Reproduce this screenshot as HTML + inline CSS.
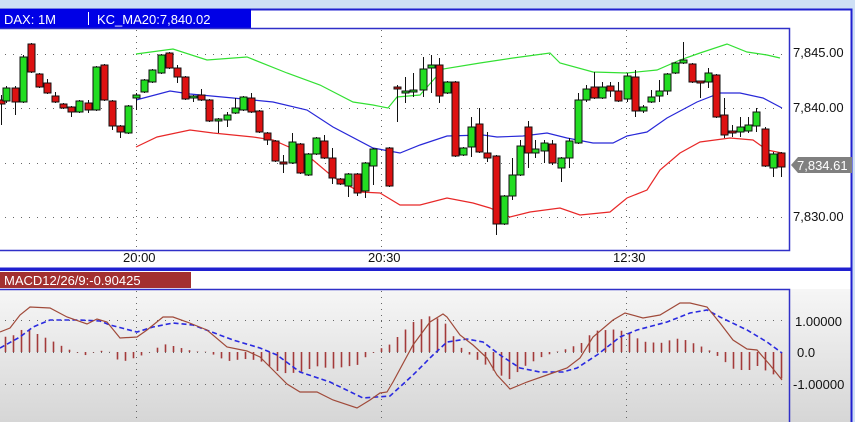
<!DOCTYPE html>
<html><head><meta charset="utf-8"><style>
html,body{margin:0;padding:0;width:855px;height:422px;overflow:hidden;background:#cfe0f5;font-family:"Liberation Sans",sans-serif}
svg{position:absolute;left:0;top:0}
</style></head><body>
<svg id="s" width="855" height="422" xmlns="http://www.w3.org/2000/svg">
<defs><linearGradient id="g" x1="0" y1="0" x2="0" y2="1"><stop offset="0" stop-color="#fbfbfb"/><stop offset="1" stop-color="#d6d6d6"/></linearGradient></defs>
<rect x="0" y="9" width="852" height="260" fill="#fff"/>
<rect x="0" y="269" width="852" height="153" fill="url(#g)"/>
<rect x="0" y="269" width="852" height="20" fill="#fff"/>
<path d="M0 9.5H851.5V268.5H0" fill="none" stroke="#2020d0" stroke-width="2"/>
<path d="M0 270H851.5V422" fill="none" stroke="#2020d0" stroke-width="2"/>
<rect x="0" y="9" width="251" height="19" fill="#0000e6"/>
<text x="4" y="24" fill="#fff" font-size="13">DAX: 1M</text>
<rect x="88" y="12" width="1" height="13" fill="#fff"/>
<text x="97" y="24" fill="#fff" font-size="13">KC_MA20:7,840.02</text>
<path d="M0 28.5H789.5V250.5H0" fill="none" stroke="#3030c8" stroke-width="1.5"/>
<rect x="0" y="272" width="191" height="16" fill="#a33030"/>
<text x="4" y="285" fill="#fff" font-size="13">MACD12/26/9:-0.90425</text>
<path d="M0 289.5H789.5V422" fill="none" stroke="#3030c8" stroke-width="1.5"/>
<g font-size="13" fill="#111">
<text x="793" y="57">7,845.00</text><text x="793" y="112">7,840.00</text><text x="793" y="221">7,830.00</text>
<text x="123" y="262">20:00</text><text x="368" y="262">20:30</text><text x="613" y="262">12:30</text>
<text x="795" y="326">1.00000</text><text x="797" y="357">0.0</text><text x="793" y="389">-1.00000</text>
</g>
<path d="M791 165L798 157H852V173H798Z" fill="#808080"/>
<text x="797" y="170" fill="#fff" font-size="13">7,834.61</text>
<g id="grid" stroke="#666" stroke-width="1" stroke-dasharray="1 7"></g>
<g id="c"></g>
</svg>
<script>
var NS="http://www.w3.org/2000/svg",S=document.getElementById('s'),G=document.getElementById('grid'),C=document.getElementById('c');
function el(t,a,p){var e=document.createElementNS(NS,t);for(var k in a)e.setAttribute(k,a[k]);(p||C).appendChild(e);return e}
[54,108,163,217,320,352,384].forEach(function(y){el('line',{x1:5,x2:788,y1:y+.5,y2:y+.5},G)});
[136,381,626].forEach(function(x){el('line',{x1:x+.5,x2:x+.5,y1:30,y2:250,'stroke-dasharray':'1 5'},G);el('line',{x1:x+.5,x2:x+.5,y1:291,y2:422,'stroke-dasharray':'1 5'},G)});
function pl(pts,col,dash){el('polyline',{points:pts.map(function(p){return p.join(',')}).join(' '),fill:'none',stroke:col,'stroke-width':dash?1.6:1.2,'stroke-dasharray':dash||''})}
pl([[136,54],[173,49],[207,60],[247,57],[287,73],[320,85],[353,102],[373,105],[388,108],[397,97],[420,95],[443,69],[480,63],[513,58],[550,53],[560,63],[593,72],[627,73],[657,70],[680,60],[700,53],[727,44],[747,52],[767,55],[780,58]],'#33e033');
pl([[136,100],[170,91],[190,94],[233,98],[273,102],[307,110],[333,127],[373,148],[400,153],[420,145],[447,136],[483,135],[497,137],[523,136],[547,133],[567,138],[593,143],[613,143],[627,136],[647,132],[667,118],[697,102],[720,93],[740,93],[763,98],[782,108]],'#2828d8');
pl([[136,147],[157,137],[190,130],[213,133],[253,137],[273,140],[307,155],[333,177],[360,192],[380,193],[400,205],[420,205],[447,198],[473,203],[490,208],[510,217],[530,212],[560,208],[580,215],[610,212],[627,198],[647,190],[660,170],[680,153],[700,142],[730,138],[753,140],[767,150],[782,153]],'#e82828');
var K=[[1,100,104,95,125,'r'],[6,88,101,86,103,'g'],[15,88,102,86,115,'r'],[23,57,102,55,103,'g'],[31,44,72,43,73,'r'],[39,74,87,73,88,'r'],[47,83,93,79,94,'r'],[55,96,102,92,103,'r'],[63,104,108,103,109,'r'],[71,107,112,106,117,'r'],[79,101,112,100,113,'g'],[88,103,110,100,113,'r'],[96,67,110,66,111,'g'],[104,65,100,64,101,'r'],[112,101,126,100,130,'r'],[120,126,132,125,138,'r'],[128,106,133,105,134,'g'],[136,95,98,93,110,'g'],[144,80,92,79,93,'g'],[152,70,82,69,83,'g'],[161,55,73,54,74,'g'],[169,53,68,52,69,'r'],[177,68,77,65,83,'r'],[185,77,99,76,100,'r'],[193,96,98,95,102,'g'],[201,95,100,89,101,'r'],[209,100,121,99,122,'r'],[218,119,121,118,133,'g'],[227,115,120,112,127,'g'],[235,108,113,98,114,'g'],[243,97,110,96,111,'g'],[251,98,112,93,113,'r'],[259,111,132,110,133,'r'],[267,133,140,132,145,'r'],[275,141,161,140,162,'r'],[283,162,164,155,173,'r'],[292,142,163,133,164,'g'],[300,144,173,143,174,'r'],[308,154,175,153,176,'g'],[316,138,154,137,155,'g'],[324,141,158,135,159,'r'],[332,158,178,148,184,'r'],[340,179,184,178,185,'r'],[348,174,186,173,197,'g'],[357,174,193,173,196,'r'],[365,163,191,162,198,'g'],[373,149,166,148,185,'g'],[389,148,186,147,187,'r'],[397,87,89,85,122,'r'],[405,91,93,77,103,'g'],[413,90,92,73,97,'g'],[423,69,90,57,97,'g'],[431,65,68,55,93,'g'],[439,65,96,58,103,'r'],[447,82,93,81,94,'g'],[455,82,156,81,157,'r'],[463,148,155,147,156,'g'],[471,127,147,117,157,'g'],[479,124,152,108,153,'r'],[487,153,158,132,162,'r'],[496,156,224,155,235,'r'],[504,196,224,195,225,'g'],[512,175,196,158,200,'g'],[520,146,175,140,176,'g'],[528,127,153,121,168,'r'],[535,149,153,140,158,'g'],[544,143,151,140,163,'g'],[552,144,163,140,165,'r'],[561,158,168,157,182,'g'],[569,141,158,138,168,'g'],[578,100,143,93,144,'g'],[586,89,100,85,102,'g'],[594,87,98,72,99,'r'],[602,87,98,82,99,'g'],[610,86,91,82,97,'r'],[618,91,101,82,102,'r'],[627,76,99,73,102,'g'],[635,77,111,70,117,'r'],[643,107,111,105,113,'g'],[651,97,102,90,103,'g'],[659,91,96,80,102,'g'],[667,74,91,73,95,'g'],[675,63,73,62,74,'g'],[683,60,63,42,64,'g'],[692,64,82,63,83,'r'],[700,81,83,81,98,'r'],[708,73,82,68,88,'g'],[716,75,117,74,118,'r'],[724,115,135,98,138,'r'],[732,131,133,125,137,'r'],[740,127,132,117,137,'g'],[748,125,131,117,133,'g'],[756,112,126,108,132,'g'],[765,129,166,127,167,'r'],[773,154,168,152,177,'g'],[781,153,167,152,177,'r']];
K.forEach(function(k){el('line',{x1:k[0]+.5,x2:k[0]+.5,y1:k[3],y2:k[4],stroke:'#111','stroke-width':1});el('rect',{x:k[0]-3,y:k[1],width:7,height:Math.max(2,k[2]-k[1]),fill:k[5]=='g'?'#22dd22':'#dd1111',stroke:'#111','stroke-width':1})});
var M=[[0,332],[10,328],[20,315],[30,307],[50,308],[67,317],[87,324],[97,319],[107,322],[120,338],[137,337],[147,330],[163,317],[173,317],[187,322],[207,330],[227,347],[247,351],[260,357],[273,370],[287,384],[300,392],[317,392],[333,400],[357,408],[370,400],[380,393],[387,392],[393,382],[413,345],[430,322],[443,314],[447,317],[460,335],[473,345],[487,358],[497,375],[510,389],[527,382],[547,375],[567,368],[580,358],[593,337],[613,320],[625,313],[643,318],[660,315],[680,303],[690,303],[707,307],[720,323],[733,340],[747,349],[757,350],[770,365],[782,380]];
var Sg=[[0,348],[20,337],[33,327],[50,320],[80,320],[100,321],[110,325],[137,332],[153,327],[173,323],[193,325],[233,340],[260,348],[277,355],[300,372],[330,382],[363,398],[390,396],[413,375],[433,355],[447,342],[467,339],[483,342],[500,355],[520,368],[540,372],[563,372],[577,368],[597,355],[620,337],[637,330],[667,322],[690,313],[707,310],[720,317],[747,330],[767,342],[782,353]];
function at(A,x){for(var i=1;i<A.length;i++)if(A[i][0]>=x){var a=A[i-1],b=A[i];return a[1]+(b[1]-a[1])*(x-a[0])/(b[0]-a[0])}return A[A.length-1][1]}
for(var x=5;x<=781;x+=8){var h=at(Sg,x)-at(M,x);el('line',{x1:x+.5,x2:x+.5,y1:352,y2:352-h,stroke:'#a33a3a','stroke-width':1.6})}
pl(Sg,'#2a2ae0','5 3');pl(M,'#a04a3a');
</script>
</body></html>
